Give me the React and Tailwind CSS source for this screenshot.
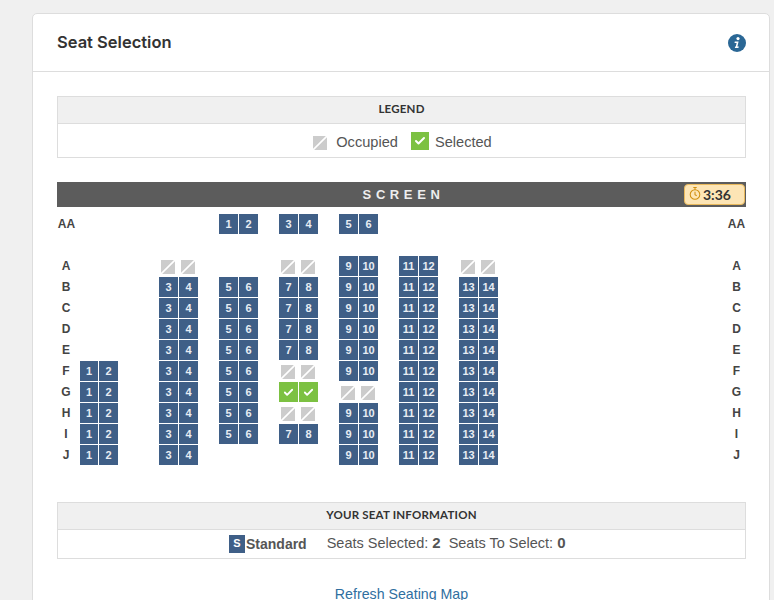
import React from "react";
import { Check } from "lucide-react";

// left margin of each seat pair, the aisles are not all the same
const groupMargins = ["ml-0", "ml-[40px]", "ml-[20px]", "ml-[20px]", "ml-[20px]", "ml-[20px]", "ml-[20px]"];

const pairs = [
  [1, 2],
  [3, 4],
  [5, 6],
  [7, 8],
  [9, 10],
  [11, 12],
  [13, 14],
];

// o = occupied, s = selected, n = open seat, _ = no seat
const seatRows = [
  { label: "A", map: ["_", "o", "_", "o", "n", "n", "o"] },
  { label: "B", map: ["_", "n", "n", "n", "n", "n", "n"] },
  { label: "C", map: ["_", "n", "n", "n", "n", "n", "n"] },
  { label: "D", map: ["_", "n", "n", "n", "n", "n", "n"] },
  { label: "E", map: ["_", "n", "n", "n", "n", "n", "n"] },
  { label: "F", map: ["n", "n", "n", "o", "n", "n", "n"] },
  { label: "G", map: ["n", "n", "n", "s", "o", "n", "n"] },
  { label: "H", map: ["n", "n", "n", "o", "n", "n", "n"] },
  { label: "I", map: ["n", "n", "n", "n", "n", "n", "n"] },
  { label: "J", map: ["n", "n", "_", "_", "n", "n", "n"] },
];

const OccupiedIcon = ({ className }) => (
  <svg viewBox="0 0 14 14" className={className}>
    <rect width="14" height="14" fill="#cccccc" />
    <path d="M0 14 L14 0" stroke="#ffffff" strokeWidth="1.6" />
  </svg>
);

const Seat = ({ type, number, narrow }) => {
  const width = narrow ? "w-[18px]" : "w-[19px]";
  if (type === "o") {
    return (
      <div className={`${width} h-5 shrink-0`}>
        <OccupiedIcon className={`w-[14px] h-[14px] mt-1 ${narrow ? "ml-px" : "ml-0.5"}`} />
      </div>
    );
  }
  if (type === "s") {
    return (
      <div className={`${width} h-5 shrink-0 bg-[#7cc142] flex items-center justify-center text-white`}>
        <Check size={11} strokeWidth={4} />
      </div>
    );
  }
  return (
    <div className={`${width} h-5 shrink-0 bg-[#3f5f87] flex items-center justify-center text-[11px] font-bold text-[#e8edf3]`}>
      {number}
    </div>
  );
};

const SeatPair = ({ type, numbers, margin, first }) => (
  <div className={`flex gap-px ${first ? "w-[39px]" : "w-10"} ${margin}`}>
    {type !== "_" && (
      <>
        <Seat type={type} number={numbers[0]} narrow={first} />
        <Seat type={type} number={numbers[1]} />
      </>
    )}
  </div>
);

const RowLabel = ({ children, className }) => (
  <div className={`text-xs font-bold text-[#444] text-center ${className}`}>{children}</div>
);

const SeatMap = () => (
  <div className="mt-[7px] flex flex-col gap-px">
    {/* front row has its own numbering */}
    <div className="flex h-5 items-center">
      <RowLabel className="w-[19px]">AA</RowLabel>
      <div className="flex gap-5 ml-[143px]">
        <SeatPair type="n" numbers={[1, 2]} margin="" />
        <SeatPair type="n" numbers={[3, 4]} margin="" />
        <SeatPair type="n" numbers={[5, 6]} margin="" />
      </div>
      <RowLabel className="ml-auto w-[19px]">AA</RowLabel>
    </div>
    <div className="h-5" />
    {seatRows.map((row) => (
      <div key={row.label} className="flex h-5 items-center">
        <RowLabel className="w-[23px] pr-[5px]">{row.label}</RowLabel>
        {pairs.map((numbers, i) => (
          <SeatPair
            key={numbers[0]}
            type={row.map[i]}
            numbers={numbers}
            margin={groupMargins[i]}
            first={i === 0}
          />
        ))}
        <RowLabel className="ml-auto w-[19px]">{row.label}</RowLabel>
      </div>
    ))}
  </div>
);

const TableHeader = ({ children }) => (
  <div className="h-[27px] pb-0.5 bg-[#f0f0f0] border-b border-[#dddddd] flex items-center justify-center text-[11.5px] font-bold tracking-[0.2px] text-[#333] font-['Lato',sans-serif]">
    {children}
  </div>
);

export default function App() {
  return (
    <div className="h-[600px] overflow-hidden bg-[#f0f0f0] pt-[13px] pl-8 pr-1 font-['Liberation_Sans',sans-serif] text-[#555]">
      <div className="h-[700px] bg-white border border-[#dddddd] rounded-[5px]">
        <div className="h-[58px] pb-px border-b border-[#dddddd] flex items-center justify-between pl-6 pr-[23px]">
          <h1 className="text-[16.5px] font-semibold text-[#333] font-['Inter',sans-serif]">Seat Selection</h1>
          <svg viewBox="0 0 18 18" className="w-[18px] h-[18px] mt-px">
            <circle cx="9" cy="9" r="9" fill="#2a6795" />
            <circle cx="10" cy="4.6" r="1.6" fill="#ffffff" />
            <path d="M6.8 7.6 H10.6 L9.4 12.6 H10.8 L10.4 14 H6.8 L7.2 12.6 H7.8 L8.6 9 H6.5 Z" fill="#ffffff" />
          </svg>
        </div>

        <div className="pt-6 pl-6 pr-[23px]">
          <div className="border border-[#dddddd]">
            <TableHeader>LEGEND</TableHeader>
            <div className="h-[33px] pt-[5px] pl-0.5 flex items-center justify-center gap-[13px] text-[14.6px]">
              <div className="flex items-center gap-[9px]">
                <OccupiedIcon className="w-[14px] h-[14px]" />
                Occupied
              </div>
              <div className="flex items-center gap-1.5">
                <div className="w-[18px] h-[18px] -mt-[3px] bg-[#7cc142] flex items-center justify-center text-white">
                  <Check size={12} strokeWidth={4} />
                </div>
                Selected
              </div>
            </div>
          </div>

          <div className="relative mt-6 h-[25px] pl-1 bg-[#5c5c5c] flex items-center justify-center text-[13px] font-bold text-[#eeeeee] tracking-[4.6px]">
            SCREEN
            <div className="absolute right-px top-0.5 w-[61px] h-[21px] bg-[#fde5b5] border border-[#e9b95c] rounded flex items-center gap-0.5 pl-1 text-sm font-bold tracking-normal text-[#333] font-['Lato',sans-serif]">
              <svg viewBox="0 0 14 16" className="w-3 h-[15px] -mt-0.5" fill="none" stroke="#d08f0e" strokeWidth="1.2">
                <circle cx="7" cy="9.2" r="5.6" />
                <path d="M5 1 H9 M7 1 V3.5 M7 6 V9.4 L9 10.6" />
              </svg>
              3:36
            </div>
          </div>

          <SeatMap />

          <div className="mt-[37px] border border-[#dddddd]">
            <TableHeader>YOUR SEAT INFORMATION</TableHeader>
            <div className="h-[28px] flex items-center text-[14.5px] pl-[171px]">
              <div className="w-4 h-[18px] bg-[#3f5f87] text-white text-[11px] font-bold flex justify-center">S</div>
              <span className="ml-px text-sm font-bold text-[#555]">Standard</span>
              <span className="ml-5 -mt-0.5">Seats Selected: <b className="text-[15px]">2</b></span>
              <span className="ml-2 -mt-0.5">Seats To Select: <b className="text-[15px]">0</b></span>
            </div>
          </div>

          <div className="mt-[25px] text-center text-[14.2px] leading-5 text-[#2f6f9f]">Refresh Seating Map</div>
        </div>
      </div>
    </div>
  );
}
